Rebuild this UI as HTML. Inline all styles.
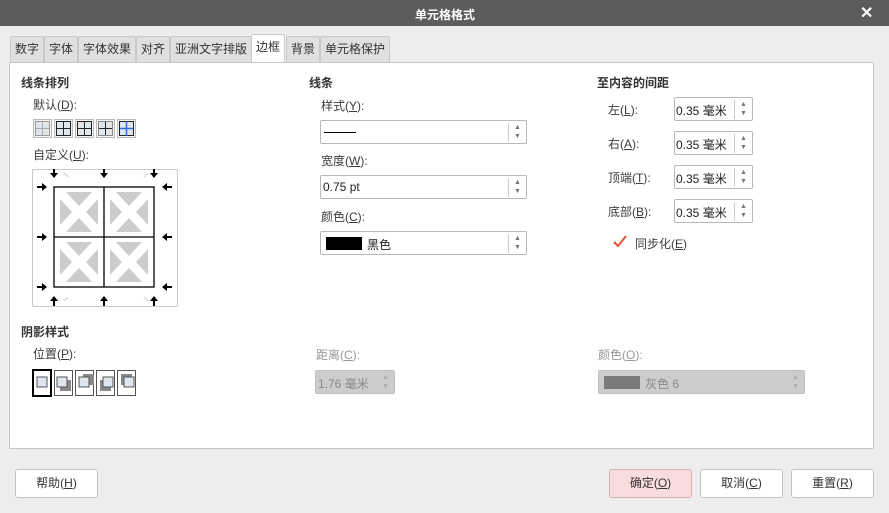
<!DOCTYPE html>
<html><head><meta charset="utf-8"><style>
*{box-sizing:border-box;margin:0;padding:0}
body{width:889px;height:513px;overflow:hidden;background:#ededed;font-family:"Liberation Sans","Noto Sans CJK SC",sans-serif;font-size:12px;color:#3c3c3c;position:relative}
.a{position:absolute}
.title{left:0;top:0;width:889px;height:26px;background:#5c5c5c;color:#fff;font-weight:bold;font-size:12px}
.tab{position:absolute;top:36px;height:26px;background:#e0e0e0;border:1px solid #c8c8c8;border-bottom:none;line-height:25px;padding:0 4px;font-size:12px;color:#333;border-radius:2px 2px 0 0}
.tab.on{background:#fff;top:34px;height:29px}
.panel{left:9px;top:62px;width:865px;height:387px;background:#fff;border:1px solid #c6c6c6;border-radius:2px}
.h{font-weight:bold;color:#333}
.box{position:absolute;border:1px solid #b8b8b8;background:#fff;border-radius:2px;height:24px}
.spin{position:absolute;right:0;top:2px;width:18px;height:19px;border-left:1px solid #ccc;font-size:7px;color:#777;text-align:center;line-height:9px}
.btn{position:absolute;top:469px;height:29px;border:1px solid #c2c2c2;border-radius:3px;background:#fff;text-align:center;line-height:27px;color:#333}
.ic{position:absolute;width:19px;height:19px;border:1px solid #bbb;background:#f4f4f4}
</style></head><body>
<div class="a title"><span class="a" style="left:415px;top:6px">单元格格式</span><span class="a" style="left:860px;top:3px;font-size:16px">✕</span></div>
<div class="tab" style="left:10px">数字</div>
<div class="tab" style="left:44px">字体</div>
<div class="tab" style="left:78px">字体效果</div>
<div class="tab" style="left:136px">对齐</div>
<div class="tab" style="left:170px">亚洲文字排版</div>
<div class="tab on" style="left:251px">边框</div>
<div class="tab" style="left:286px">背景</div>
<div class="tab" style="left:320px">单元格保护</div>
<div class="a panel"></div>
<div class="a h" style="left:21px;top:74px">线条排列</div>
<div class="a" style="left:33px;top:96px">默认(<u>D</u>):</div>
<div class="ic" style="left:33px;top:119px"></div>
<div class="ic" style="left:54px;top:119px"></div>
<div class="ic" style="left:75px;top:119px"></div>
<div class="ic" style="left:96px;top:119px"></div>
<div class="ic" style="left:117px;top:119px"></div>
<svg class="a" style="left:33px;top:119px" width="104" height="19"><g fill="#dfe6ec" stroke="#999"><rect x="2.5" y="2.5" width="14" height="14"/><rect x="23.5" y="2.5" width="14" height="14" stroke="#222"/><rect x="44.5" y="2.5" width="14" height="14" stroke="#222"/><rect x="65.5" y="2.5" width="14" height="14" stroke="#222" stroke-dasharray="1 1"/><rect x="86.5" y="2.5" width="14" height="14" stroke="#222"/></g><g fill="none"><path d="M3 9.5H16M9.5 3V16" stroke="#aaa"/><path d="M24 9.5H37M30.5 3V16" stroke="#222"/><path d="M45 9.5H58M51.5 3V16" stroke="#222"/><path d="M66 9.5H79M72.5 3V16" stroke="#222"/><path d="M87 9.5H100M93.5 2V17" stroke="#2a6fe6" stroke-width="1.5"/></g></svg>
<div class="a" style="left:33px;top:146px">自定义(<u>U</u>):</div>
<div class="a" style="left:32px;top:169px;width:146px;height:138px;border:1px solid #c8c8c8;border-radius:2px;background:#fff"></div>
<svg class="a" style="left:32px;top:169px" width="146" height="138">
<defs><g id="c" fill="#ccc"><path d="M12 5h26l-13 14zM12 45h26l-13-14zM6 12v26l12-13zM44 12v26l-12-13z"/></g></defs>
<use href="#c" x="22" y="18"/><use href="#c" x="72" y="18"/><use href="#c" x="22" y="68"/><use href="#c" x="72" y="68"/>
<g stroke="#000" fill="none" stroke-width="1.3"><rect x="22" y="18" width="100" height="100"/><path d="M72 18v100M22 68h100"/></g>
<g fill="#000"><path d="M18 4h8l-4 5zM68 4h8l-4 5zM118 4h8l-4 5z"/><path d="M18 132h8l-4-5zM68 132h8l-4-5zM118 132h8l-4-5z"/><path d="M10 14v8l5-4zM10 64v8l5-4zM10 114v8l5-4z"/><path d="M135 14v8l-5-4zM135 64v8l-5-4zM135 114v8l-5-4z"/><path d="M21 0h2v5h-2zM71 0h2v5h-2zM121 0h2v5h-2zM21 132h2v5h-2zM71 132h2v5h-2zM121 132h2v5h-2zM5 17h5v2H5zM5 67h5v2H5zM5 117h5v2H5zM135 17h5v2h-5zM135 67h5v2h-5zM135 117h5v2h-5z"/></g>
<g stroke="#ccc"><path d="M32 4l4 4M112 8l4-4M32 132l4-4M112 128l4 4"/></g></svg>
<div class="a h" style="left:21px;top:323px">阴影样式</div>
<div class="a" style="left:33px;top:345px">位置(<u>P</u>):</div>
<div class="a" style="left:32px;top:369px;width:20px;height:28px;border:2px double #000"></div>
<div class="a" style="left:54px;top:370px;width:19px;height:26px;border:1px solid #555"></div>
<div class="a" style="left:75px;top:370px;width:19px;height:26px;border:1px solid #555"></div>
<div class="a" style="left:96px;top:370px;width:19px;height:26px;border:1px solid #555"></div>
<div class="a" style="left:117px;top:370px;width:19px;height:26px;border:1px solid #555"></div>
<svg class="a" style="left:32px;top:369px" width="106" height="30"><g stroke="#555" fill="#dfe6ed"><rect x="5" y="8" width="10" height="10"/><path d="M28 11h11v11H28z" fill="#888" stroke="none"/><rect x="25" y="8" width="10" height="10"/><path d="M51 5h11v11H51z" fill="#888" stroke="none"/><rect x="47" y="8" width="10" height="10"/><path d="M68 11h11v11H68z" fill="#888" stroke="none"/><rect x="71" y="8" width="10" height="10"/><path d="M89 5h11v11H89z" fill="#888" stroke="none"/><rect x="92" y="8" width="10" height="10"/></g></svg>
<div class="a h" style="left:309px;top:74px">线条</div>
<div class="a" style="left:321px;top:97px">样式(<u>Y</u>):</div>
<div class="box" style="left:320px;top:120px;width:207px"><div class="a" style="left:3px;top:11px;width:32px;height:1px;background:#000"></div><div class="spin">▲<br>▼</div></div>
<div class="a" style="left:321px;top:152px">宽度(<u>W</u>):</div>
<div class="box" style="left:320px;top:175px;width:207px"><span class="a" style="left:2px;top:4px;color:#222">0.75 pt</span><div class="spin">▲<br>▼</div></div>
<div class="a" style="left:321px;top:208px">颜色(<u>C</u>):</div>
<div class="box" style="left:320px;top:231px;width:207px"><div class="a" style="left:5px;top:5px;width:36px;height:13px;background:#000"></div><span class="a" style="left:46px;top:4px;color:#222">黑色</span><div class="spin">▲<br>▼</div></div>
<div class="a" style="left:316px;top:346px;color:#999">距离(<u>C</u>):</div>
<div class="box" style="left:315px;top:370px;width:80px;background:#ccc;border-color:#c0c0c0"><span class="a" style="left:2px;top:4px;color:#888">1.76 毫米</span><div class="spin" style="color:#aaa">▲<br>▼</div></div>
<div class="a" style="left:598px;top:346px;color:#999">颜色(<u>O</u>):</div>
<div class="box" style="left:598px;top:370px;width:207px;background:#ccc;border-color:#c0c0c0"><div class="a" style="left:5px;top:5px;width:36px;height:13px;background:#7a7a7a"></div><span class="a" style="left:46px;top:4px;color:#888">灰色 6</span><div class="spin" style="color:#aaa">▲<br>▼</div></div>
<div class="a h" style="left:597px;top:74px">至内容的间距</div>
<div class="a" style="left:608px;top:101px">左(<u>L</u>):</div>
<div class="a" style="left:608px;top:135px">右(<u>A</u>):</div>
<div class="a" style="left:608px;top:169px">顶端(<u>T</u>):</div>
<div class="a" style="left:608px;top:203px">底部(<u>B</u>):</div>
<div class="box" style="left:674px;top:97px;width:79px"><span class="a" style="left:1px;top:4px;color:#222">0.35 毫米</span><div class="spin">▲<br>▼</div></div>
<div class="box" style="left:674px;top:131px;width:79px"><span class="a" style="left:1px;top:4px;color:#222">0.35 毫米</span><div class="spin">▲<br>▼</div></div>
<div class="box" style="left:674px;top:165px;width:79px"><span class="a" style="left:1px;top:4px;color:#222">0.35 毫米</span><div class="spin">▲<br>▼</div></div>
<div class="box" style="left:674px;top:199px;width:79px"><span class="a" style="left:1px;top:4px;color:#222">0.35 毫米</span><div class="spin">▲<br>▼</div></div>
<svg class="a" style="left:612px;top:234px" width="16" height="16"><path d="M2 8l4 4 8-10" stroke="#e0533a" stroke-width="2" fill="none"/></svg>
<div class="a" style="left:635px;top:235px">同步化(<u>E</u>)</div>
<div class="btn" style="left:15px;width:83px">帮助(<u>H</u>)</div>
<div class="btn" style="left:609px;width:83px;background:#f9dcdc;border-color:#d9b0b0">确定(<u>O</u>)</div>
<div class="btn" style="left:700px;width:83px">取消(<u>C</u>)</div>
<div class="btn" style="left:791px;width:83px">重置(<u>R</u>)</div>
</body></html>
